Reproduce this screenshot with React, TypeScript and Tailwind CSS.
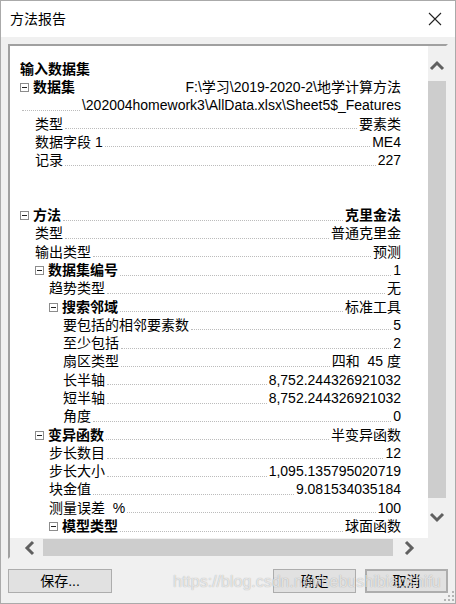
import type { ReactNode } from "react"

interface ReportRow {
  level: number
  label?: string
  value?: string
  bold?: boolean
  boldValue?: boolean
  toggle?: boolean
  leader?: boolean
}

const rows: ReportRow[] = [
  { level: 0, label: "输入数据集", bold: true },
  { level: 0, label: "数据集", bold: true, toggle: true, value: "F:\\学习\\2019-2020-2\\地学计算方法" },
  { level: 0, value: "\\202004homework3\\AllData.xlsx\\Sheet5$_Features", leader: true },
  { level: 1, label: "类型", value: "要素类", leader: true },
  { level: 1, label: "数据字段 1", value: "ME4", leader: true },
  { level: 1, label: "记录", value: "227", leader: true },
  { level: 0 },
  { level: 0 },
  { level: 0, label: "方法", bold: true, toggle: true, value: "克里金法", boldValue: true, leader: true },
  { level: 1, label: "类型", value: "普通克里金", leader: true },
  { level: 1, label: "输出类型", value: "预测", leader: true },
  { level: 1, label: "数据集编号", bold: true, toggle: true, value: "1", leader: true },
  { level: 2, label: "趋势类型", value: "无", leader: true },
  { level: 2, label: "搜索邻域", bold: true, toggle: true, value: "标准工具", leader: true },
  { level: 3, label: "要包括的相邻要素数", value: "5", leader: true },
  { level: 3, label: "至少包括", value: "2", leader: true },
  { level: 3, label: "扇区类型", value: "四和  45 度", leader: true },
  { level: 3, label: "长半轴", value: "8,752.244326921032", leader: true },
  { level: 3, label: "短半轴", value: "8,752.244326921032", leader: true },
  { level: 3, label: "角度", value: "0", leader: true },
  { level: 1, label: "变异函数", bold: true, toggle: true, value: "半变异函数", leader: true },
  { level: 2, label: "步长数目", value: "12", leader: true },
  { level: 2, label: "步长大小", value: "1,095.135795020719", leader: true },
  { level: 2, label: "块金值", value: "9.081534035184", leader: true },
  { level: 2, label: "测量误差  %", value: "100", leader: true },
  { level: 2, label: "模型类型", bold: true, toggle: true, value: "球面函数", leader: true },
]

const indents = ["pl-0", "pl-[15px]", "pl-[29px]", "pl-[43px]"]

function ToggleBox() {
  return (
    <svg width="9" height="9" viewBox="0 0 9 9" className="mr-[4px] flex-shrink-0">
      <rect x="0.5" y="0.5" width="8" height="8" fill="white" stroke="#8c8c8c" />
      <line x1="2" y1="4.5" x2="7" y2="4.5" stroke="#222" />
    </svg>
  )
}

function Chevron({ dir }: { dir: "up" | "down" | "left" | "right" }) {
  const d =
    dir === "up" ? "M2 9 L8 3 L14 9" :
    dir === "down" ? "M2 3 L8 9 L14 3" :
    dir === "left" ? "M9 2 L3 8 L9 14" :
    "M3 2 L9 8 L3 14"
  const vertical = dir === "up" || dir === "down"
  return (
    <svg width={vertical ? 16 : 12} height={vertical ? 12 : 16} viewBox={vertical ? "0 0 16 12" : "0 0 12 16"}>
      <path d={d} fill="none" stroke="#606060" strokeWidth="3" />
    </svg>
  )
}

function Row({ row }: { row: ReportRow }) {
  return (
    <div className={`flex h-[18.3px] items-center whitespace-pre ${indents[row.level]}`}>
      {row.toggle && <ToggleBox />}
      {row.label && <span className={row.bold ? "font-bold" : ""}>{row.label}</span>}
      {row.leader ? (
        <span className="mx-[2px] mb-[4px] flex-1 self-end border-b border-dotted border-[#bcbcbc]" />
      ) : (
        <span className="flex-1" />
      )}
      {row.value && <span className={row.boldValue ? "font-bold" : ""}>{row.value}</span>}
    </div>
  )
}

function Button({ children, className }: { children: ReactNode; className?: string }) {
  return (
    <div
      className={`flex h-[24px] items-center justify-center border border-[#adadad] bg-[#e1e1e1] text-[14px] text-black ${className ?? ""}`}
    >
      {children}
    </div>
  )
}

export default function App() {
  return (
    <div
      className="relative h-[604px] w-[456px] overflow-hidden border border-[#aaaaaa] bg-[#f0f0f0] text-[14px] text-black"
      style={{ fontFamily: '"Liberation Sans", "Noto Sans CJK SC", sans-serif' }}
    >
      {/* title bar */}
      <div className="flex h-[36px] items-center justify-between bg-white pl-[9px] pr-[13px]">
        <span className="text-[14px]">方法报告</span>
        <svg width="14" height="14" viewBox="0 0 14 14">
          <path d="M1 1 L13 13 M13 1 L1 13" stroke="#222" strokeWidth="1.1" />
        </svg>
      </div>

      {/* report panel */}
      <div className="ml-[7px] mt-[7px] flex h-[515px] w-[440px] flex-col border-2 border-[#a0a0a0] border-r-[#f0f0f0] border-b-[#f0f0f0]">
        <div className="flex min-h-0 flex-1">
          <div className="min-w-0 flex-1 overflow-hidden bg-white pl-[10px] pr-[27px] pt-[14px]">
            {rows.map((row, i) => (
              <Row key={i} row={row} />
            ))}
          </div>
          {/* vertical scrollbar */}
          <div className="flex w-[18px] flex-col bg-[#f0f0f0]">
            <div className="flex h-[35px] items-end justify-center pb-[9px]">
              <Chevron dir="up" />
            </div>
            <div className="flex-1 bg-[#cdcdcd]" />
            <div className="flex h-[40px] items-start justify-center pt-[13px]">
              <Chevron dir="down" />
            </div>
          </div>
        </div>
        {/* horizontal scrollbar */}
        <div className="flex h-[19px] bg-[#f0f0f0]">
          <div className="flex w-[33px] items-center justify-center pl-[6px]">
            <Chevron dir="left" />
          </div>
          <div className="my-[1px] w-[350px] bg-[#cdcdcd]" />
          <div className="flex flex-1 items-center justify-center pr-[4px]">
            <Chevron dir="right" />
          </div>
          <div className="w-[18px]" />
        </div>
      </div>

      {/* buttons */}
      <div className="ml-[7px] mt-[10px] flex w-[440px] items-center">
        <Button className="w-[104px]">保存...</Button>
        <div className="flex-1" />
        <Button className="w-[83px]">确定</Button>
        <Button className="ml-[9px] w-[83px] border-2 border-[#0078d7]">取消</Button>
      </div>

      {/* size grip */}
      <svg width="10" height="10" viewBox="0 0 10 10" className="absolute bottom-[2px] right-[1px]">
        {[[8, 0], [4, 4], [8, 4], [0, 8], [4, 8], [8, 8]].map(([x, y], i) => (
          <rect key={i} x={x} y={y} width="2" height="2" fill="#b4b4b4" />
        ))}
      </svg>

      {/* watermark */}
      <div className="pointer-events-none absolute left-[172px] top-[569px] whitespace-nowrap text-[16px] text-white/70 [text-shadow:0_0_1px_rgba(0,0,0,0.35)]">
        https://blog.csdn.net/hebushibiaoshifu
      </div>
    </div>
  )
}
